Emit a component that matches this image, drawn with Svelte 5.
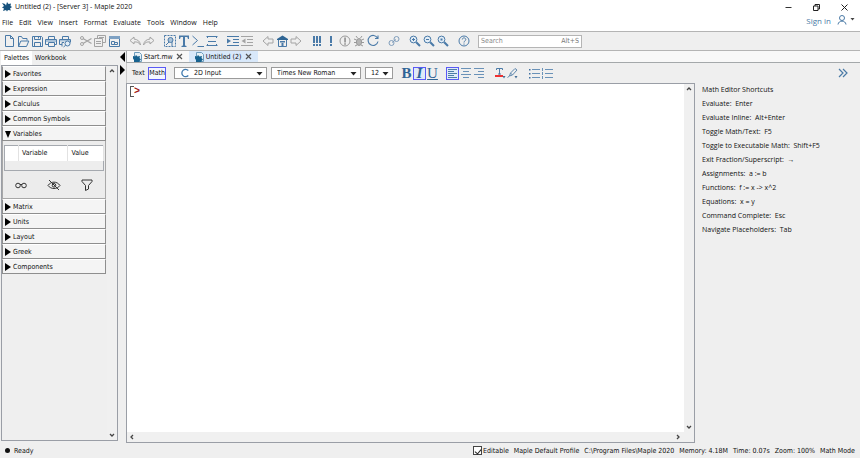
<script>
  const B = '#4a7aa8';
  const G = '#a4a4a4';
  const line = (d, c = B, w = 1) => `<path d="${d}" fill="none" stroke="${c}" stroke-width="${w}"/>`;
  const solid = (d, c = B) => `<path d="${d}" fill="${c}"/>`;
  const lens = '<circle cx="5.5" cy="5.5" r="3.4" fill="#e3edf6" stroke="#4a7aa8"/>' + line('M8.2 8.2L12 12', B, 2);

  const icons = {
    new: line('M3.5 1.5h5l3 3v8h-8z M8.500 1.500v3h3'),
    open: line('M2.500 12.500v-10h3l1.200 2h4.300v2 M2.500 12.500l2.300-5.500h8l-2.300 5.500z'),
    save: line('M2.500 2.500h9l1 1v9h-10z M4.500 2.500v3h6v-3 M4.500 12.500v-4h6v4 M8.500 3v1.500'),
    print: line('M4.500 5V2.500h6V5 M4 10.500H1.500v-5h11v5H10.500 M4.500 8.500h6v4h-6z') + solid('M2 6h10v2H2z', '#a9c2d9'),
    preview: line('M4.500 5V2.500h6V5 M4 10.500H1.500v-5h11v3 M4 12.500V8.500h2') + solid('M2 6h10v1.500H2z', '#a9c2d9') + '<circle cx="9.500" cy="9.500" r="2.500" fill="#e3edf6" stroke="#4a7aa8"/>' + line('M7.600 11.300L5.500 13'),
    cut: line('M4 4.500L12.500 9.500 M4 9.500L12.500 4.500', G, 1.3) + '<circle cx="3" cy="4" r="1.500" fill="none" stroke="#a4a4a4"/><circle cx="3" cy="10" r="1.500" fill="none" stroke="#a4a4a4"/>',
    copy: line('M4.500 4V1.500h8v7H10 M1.500 4.500h8v8h-8z M3 7.500h5 M3 9.500h5 M6 3.500h5', G),
    paste: line('M2.500 2.500h10v10h-10z') + solid('M2 2h11v3H2z', '#7ea1c3') + line('M4.500 7.500h3v3h-3z M7.500 8.500h3v2h-3z'),
    undo: line('M6 3L2 6.500L6 10V8c3-.5 5 .500 6.500 3C12 7.500 10 5.500 6 5z', G),
    redo: line('M8 3l4 3.500L8 10V8c-3-.5-5 .500-6.500 3C2 7.500 4 5.500 8 5z', G),
    region: '<rect x="1.500" y="1.500" width="11" height="11" fill="none" stroke="#4a7aa8" stroke-dasharray="2 1"/><circle cx="7.500" cy="6" r="2.500" fill="#a9c2d9" stroke="#4a7aa8"/>' + line('M6 8l-3 3 M9 8v4'),
    text: solid('M2 1.500h10v3.500h-1L10.300 3H8v8.500l1.500.500v1h-5v-1L6 11.500V3H3.700L3 5H2z'),
    prompt: line('M1.500 2l5 4.500l-5 4.500 M6.500 12.500h6.500'),
    section: line('M1.500 2.500h11 M2.500 4V2.500 M11.500 4V2.500 M1.500 11.500h11 M2.500 10v1.500 M11.500 10v1.500 M3 7.500h8'),
    indent: line('M1 2.500h12 M7 5.500h6 M7 8.500h6 M1 11.500h12') + solid('M1 4.500l4 2.500l-4 2.500z'),
    outdent: line('M1 2.500h12 M7 5.500h6 M7 8.500h6 M1 11.500h12', G) + solid('M5.500 4.500L1.500 7l4 2.500z', G),
    back: line('M7 2.500L2 7l5 4.500V9h5V5H7z', G),
    home: line('M3.500 5.500h8v7h-8z') + solid('M2 5L7.500 1.500L13 5v1H2z', '#2f6594') + solid('M5 7h5v1.500H5z M6.500 9h2v3.500h-2z'),
    forward: line('M7 2.500L12 7l-5 4.500V9H2V5h5z', G),
    runall: [4, 7, 10].map((x) => solid(`M${x - 1} 2h2v7h-2z M${x - 1} 10h2v2h-2z`)).join(''),
    run: solid('M6 2h2v7H6z M6 10h2v2H6z'),
    stop: '<circle cx="7" cy="7" r="5" fill="none" stroke="#999"/>' + solid('M6.300 3.500h1.500v5H6.300z M6.300 9.300h1.500v1.400H6.300z', '#888'),
    debug: '<ellipse cx="7" cy="8" rx="2.600" ry="3.500" fill="#b5b5b5" stroke="#999"/>' + line('M5.500 4L4 2 M8.500 4L10 2 M4.500 6L2 5 M9.500 6L12 5 M4.500 8.500H2 M9.500 8.500H12 M5 11l-2 1 M9 11l2 1', '#999'),
    restart: line('M11.500 4A5 5 0 1 0 12 7.500 M12 1.500v3h-3', B, 1.1),
    link: '<g fill="none" stroke="#7f9dbb"><circle cx="4.500" cy="9" r="2.500"/><circle cx="9.500" cy="5" r="2.500"/></g>' + line('M5 8.500L9 5.500', '#7f9dbb'),
    zoomin: lens + line('M4 5.500h3 M5.500 4v3'),
    zoomout: lens + line('M4 5.500h3'),
    zoomreset: lens + solid('M4.500 4.500h2v2h-2z'),
    help: '<circle cx="7" cy="7" r="5" fill="none" stroke="#4a7aa8"/>' + line('M5.300 5.500c0-2.300 3.500-2 3.500 0c0 1.500-1.800 1.200-1.800 3 M7 9.500v1.200')
  };

  const groups = [
    ['new', 'open', 'save', 'print', 'preview'],
    ['cut', 'copy', 'paste'],
    ['undo', 'redo'],
    ['region', 'text', 'prompt', 'section'],
    ['indent', 'outdent'],
    ['back', 'home', 'forward'],
    ['runall', 'run', 'stop', 'debug', 'restart'],
    ['link'],
    ['zoomin', 'zoomout', 'zoomreset'],
    ['help']
  ];

  const menus = ['File', 'Edit', 'View', 'Insert', 'Format', 'Evaluate', 'Tools', 'Window', 'Help'];
  const palettesTop = ['Favorites', 'Expression', 'Calculus', 'Common Symbols'];
  const palettesBottom = ['Matrix', 'Units', 'Layout', 'Greek', 'Components'];
  const shortcuts = [
    ['Evaluate', 'Enter'],
    ['Evaluate Inline', 'Alt+Enter'],
    ['Toggle Math/Text', 'F5'],
    ['Toggle to Executable Math', 'Shift+F5'],
    ['Exit Fraction/Superscript', '→'],
    ['Assignments', 'a := b'],
    ['Functions', 'f := x -> x^2'],
    ['Equations', 'x = y'],
    ['Command Complete', 'Esc'],
    ['Navigate Placeholders', 'Tab']
  ];
  let editable = $state(true);
</script>

{#snippet icon(name)}
  <svg width="14" height="14" viewBox="0 0 14 14" aria-hidden="true">{@html icons[name]}</svg>
{/snippet}

{#snippet leaf()}
  <svg width="10" height="10" viewBox="0 0 10 10" aria-hidden="true">
    <path d="M1.500 0.500h5l2 2v7h-7z" fill="#e6f0f6" stroke="#6d9cbc" />
    <path d="M0 4l2 .5L3 3l1.500 1.500L7 4L6.500 6L8 7.500L6.500 9v1H1V8L0 6.500z" fill="#17628f" />
  </svg>
{/snippet}

{#snippet chevron(dir)}
  <svg class="chev {dir}" width="8" height="8" viewBox="0 0 8 8" aria-hidden="true"><path d="M2 5L4 3L6 5" fill="none" stroke="#444" stroke-width="1.300" /></svg>
{/snippet}

{#snippet down()}
  <svg class="down" width="7" height="5" viewBox="0 0 7 5" aria-hidden="true"><path d="M0.500 1h6L3.500 4.500z" fill="#222" /></svg>
{/snippet}

<div class="app">
  <header>
    <div class="title">
      <svg width="10" height="10" viewBox="0 0 10 10" aria-hidden="true"><path d="M0 1l3 1l1 1.500L5 0l1.500 2L9 1.500L8.500 4L10 5L8 6.500l1 2L6 8l-1 1.500L4 8L1 9l1-2.500L0 5.500L2 4z" fill="#17527d" /></svg>
      <h1>Untitled (2) - [Server 3] - Maple 2020</h1>
      <div class="window-buttons">
        <button aria-label="Minimize"><svg width="9" height="9" viewBox="0 0 9 9"><path d="M1.500 4.500h6" stroke="#333" /></svg></button>
        <button aria-label="Restore"><svg width="9" height="9" viewBox="0 0 9 9"><path d="M1.500 3h4.500v4.500H1.500z M3 3V1.500h4.500V6H6" fill="none" stroke="#222" /></svg></button>
        <button aria-label="Close"><svg width="9" height="9" viewBox="0 0 9 9"><path d="M1.500 1.500l6 6 M7.500 1.500l-6 6" stroke="#222" /></svg></button>
      </div>
    </div>
    <div class="menu-row">
      <nav>
        {#each menus as m}<button>{m}</button>{/each}
      </nav>
      <div class="account">
        <a href="#signin">Sign in</a>
        <button aria-label="Account">
          <svg width="18" height="10" viewBox="0 0 18 10"><circle cx="5" cy="3" r="2.500" fill="none" stroke="#4a7aa6" /><path d="M1 9.500C1.500 5 8.500 5 9 9.500" fill="none" stroke="#4a7aa6" /><path d="M13.500 3h4l-2 2.500z" fill="#444" /></svg>
        </button>
      </div>
    </div>
  </header>

  <div class="toolbar" role="toolbar" aria-label="Main">
    {#each groups as g}
      <div class="group">
        {#each g as name}<button aria-label={name}>{@render icon(name)}</button>{/each}
      </div>
    {/each}
    <label class="search">
      <input type="text" placeholder="Search" aria-label="Search" />
      <span>Alt+S</span>
    </label>
  </div>

  <div class="body">
    <aside class="left">
      <div class="side-tabs">
        <button class="on">Palettes</button>
        <button>Workbook</button>
      </div>
      <div class="side-panel">
        <div class="palettes">
          {#each palettesTop as p}
            <button class="palette"><svg width="6" height="8" viewBox="0 0 6 8"><path d="M0 0l6 4L0 8z" /></svg>{p}</button>
          {/each}
          <button class="palette"><svg width="6" height="8" viewBox="0 0 6 8"><path d="M0 1h6L3 8z" /></svg>Variables</button>
          <div class="variables">
            <table>
              <thead><tr><th class="narrow"></th><th>Variable</th><th>Value</th></tr></thead>
              <tbody><tr><td colspan="3"></td></tr></tbody>
            </table>
            <div class="var-tools">
              <button aria-label="Show"><svg width="14" height="12" viewBox="0 0 14 12"><g fill="none" stroke="#333"><circle cx="4" cy="6.500" r="2.300" /><circle cx="10" cy="6.500" r="2.300" /><path d="M6 5.500h2" /></g></svg></button>
              <button aria-label="Hide"><svg width="14" height="12" viewBox="0 0 14 12"><g fill="none" stroke="#333"><path d="M1 6.500C4 2 10 2 13 6.500C10 10.500 4 10.500 1 6.500z M2 1l10 10" /><circle cx="7" cy="6.300" r="1.800" /></g></svg></button>
              <button aria-label="Filter"><svg width="14" height="12" viewBox="0 0 14 12"><path d="M2 1h10v1.500L8.500 6.500V10L5.500 11.500V6.500L2 2.500z" fill="none" stroke="#333" /></svg></button>
            </div>
          </div>
          {#each palettesBottom as p}
            <button class="palette"><svg width="6" height="8" viewBox="0 0 6 8"><path d="M0 0l6 4L0 8z" /></svg>{p}</button>
          {/each}
        </div>
        <div class="vscroll">
          <button aria-label="Scroll up">{@render chevron('up')}</button>
          <button aria-label="Scroll down">{@render chevron('dn')}</button>
        </div>
      </div>
    </aside>

    <div class="toggles">
      <button aria-label="Hide palettes"><svg width="5" height="10" viewBox="0 0 5 10"><path d="M5 0v10L0 5z" /></svg></button>
      <button aria-label="Show palettes"><svg width="5" height="10" viewBox="0 0 5 10"><path d="M0 0v10l5-5z" /></svg></button>
    </div>

    <main>
      <div class="doc-tabs">
        <div class="tab">{@render leaf()}<span>Start.mw</span><button aria-label="Close Start.mw"><svg width="7" height="7" viewBox="0 0 7 7"><path d="M1 1l5 5M6 1L1 6" stroke="#555" stroke-width="1.200" /></svg></button></div>
        <div class="tab on">{@render leaf()}<span>Untitled (2)</span><button aria-label="Close Untitled (2)"><svg width="7" height="7" viewBox="0 0 7 7"><path d="M1 1l5 5M6 1L1 6" stroke="#555" stroke-width="1.200" /></svg></button></div>
      </div>
      <div class="context">
        <div class="mode"><button>Text</button><button class="boxed">Math</button></div>
        <label class="combo style">
          <svg width="10" height="10" viewBox="0 0 10 10" aria-hidden="true"><path d="M8.300 2.500A3.700 3.700 0 1 0 8.300 7.500" fill="none" stroke="#3f79ad" stroke-width="1.300" /></svg>
          <select aria-label="Style"><option>2D Input</option></select>{@render down()}
        </label>
        <label class="combo font"><select aria-label="Font"><option>Times New Roman</option></select>{@render down()}</label>
        <label class="combo size"><select aria-label="Size"><option>12</option></select>{@render down()}</label>
        <div class="fmt letters">
          <button class="b">B</button><button class="i boxed">I</button><button class="u">U</button>
        </div>
        <div class="fmt">
          <button class="boxed" aria-label="Align left"><svg width="11" height="11" viewBox="0 0 11 11"><path d="M1 1.500h9M1 3.500h6M1 5.500h9M1 7.500h6M1 9.500h9" stroke="#4d7ca8" /></svg></button>
          <button aria-label="Align center"><svg width="12" height="12" viewBox="0 0 12 12"><path d="M1 1.500h10M3 4.500h6M1 7.500h10M3 10.500h6" stroke="#6a92b8" /></svg></button>
          <button aria-label="Align right"><svg width="12" height="12" viewBox="0 0 12 12"><path d="M1 1.500h10M5 4.500h6M1 7.500h10M5 10.500h6" stroke="#6a92b8" /></svg></button>
        </div>
        <div class="fmt">
          <button aria-label="Text color"><svg width="12" height="12" viewBox="0 0 12 12"><path d="M2.500 3V1.500h6V3M5.500 1.500v6M4 7h3" fill="none" stroke="#4d7ca8" /><path d="M1 8h8v2H1z" fill="#f03030" /><path d="M8.500 9h3L10 11.500z" fill="#456f96" /></svg></button>
          <button aria-label="Highlight"><svg width="12" height="12" viewBox="0 0 12 12"><path d="M2.500 9L3.500 6l4.500-4.500L10 3L5.500 8zM3.500 6L5.500 8M0.500 10.500L2.500 9" fill="none" stroke="#5f88ae" /><path d="M7.500 9h3L9 11.500z" fill="#456f96" /></svg></button>
        </div>
        <div class="fmt">
          <button aria-label="Bulleted list"><svg width="12" height="12" viewBox="0 0 12 12"><path d="M4 2.500h8M4 6.500h8M4 10.500h8" stroke="#6a92b8" /><path d="M1 2h1.500v1.500H1zM1 6h1.500v1.500H1zM1 10h1.500v1.500H1z" fill="#3f6f9f" /></svg></button>
          <button aria-label="Numbered list"><svg width="12" height="12" viewBox="0 0 12 12"><path d="M4 2.500h8M4 6.500h8M4 10.500h8M1.500 1v3M1.500 5v3M1.500 9v3" stroke="#6a92b8" /></svg></button>
        </div>
        <button class="expand" aria-label="Collapse panel"><svg width="10" height="10" viewBox="0 0 10 10"><path d="M1 1l4 4l-4 4M5 1l4 4l-4 4" fill="none" stroke="#4a7aa6" stroke-width="1.200" /></svg></button>
      </div>

      <div class="work">
        <section class="doc" aria-label="Worksheet">
          <div class="page-row">
            <div class="page"><span class="bracket"></span><span class="caret">&gt;</span></div>
            <div class="vscroll">
              <button aria-label="Scroll up">{@render chevron('up')}</button>
              <button aria-label="Scroll down">{@render chevron('dn')}</button>
            </div>
          </div>
          <div class="hscroll">
            <button aria-label="Scroll left">{@render chevron('lt')}</button>
            <button aria-label="Scroll right">{@render chevron('rt')}</button>
          </div>
        </section>
        <aside class="shortcuts">
          <h2>Math Editor Shortcuts</h2>
          {#each shortcuts as [name, key]}<p>{name}:&nbsp; {key}</p>{/each}
        </aside>
      </div>
    </main>
  </div>

  <footer>
    <span class="dot"></span><span>Ready</span>
    <div class="status">
      <label><input type="checkbox" bind:checked={editable} />Editable</label>
      <span>Maple Default Profile</span>
      <span>C:\Program Files\Maple 2020</span>
      <span>Memory: 4.18M</span>
      <span>Time: 0.07s</span>
      <span>Zoom: 100%</span>
      <span>Math Mode</span>
    </div>
  </footer>
</div>

<style>
  :global(body) { margin: 0; }
  .app {
    min-height: 100vh;
    display: flex;
    flex-direction: column;
    background: #efefef;
    color: #111;
    font: 7px/10px "DejaVu Sans Condensed", "DejaVu Sans", sans-serif;
  }
  .app * { box-sizing: border-box; }
  svg { display: block; flex: none; }
  button, select, input { font: inherit; color: inherit; }
  button { margin: 0; padding: 0; border: 0; background: none; white-space: nowrap; }
  h1, h2, p { margin: 0; font: inherit; }

  header { background: #fff; height: 31px; font: 7px/12px "Open Sans", sans-serif; }
  .title { display: flex; align-items: center; gap: 3px; height: 14px; padding-left: 2px; }
  .window-buttons { margin-left: auto; display: flex; gap: 19px; padding-right: 11px; }
  .menu-row { display: flex; justify-content: space-between; height: 17px; }
  nav { display: flex; align-items: center; gap: 6px; padding-left: 2px; }
  .account { display: flex; align-items: flex-start; gap: 6px; padding: 1px 5px 0 0; }
  .account a { color: #4a7aa6; font-size: 8px; text-decoration: none; }

  .toolbar {
    display: flex;
    align-items: center;
    gap: 7px;
    height: 20px;
    padding-left: 2px;
    border: solid #b4b4b4;
    border-width: 1px 0;
  }
  .group { display: flex; }
  .search {
    display: flex;
    align-items: center;
    width: 104px;
    height: 13px;
    padding: 0 2px;
    border: 1px solid #b5b5b5;
    background: #fff;
    color: #777;
  }
  .search input { flex: 1; min-width: 0; padding: 0; border: 0; outline: 0; background: none; }
  .search input::placeholder { color: #888; opacity: 1; }

  .body { flex: 1; display: flex; }
  .left { width: 118px; display: flex; flex-direction: column; padding: 0 0 2px 1px; }
  .side-tabs { display: flex; height: 14px; }
  .side-tabs button { padding: 0 3px; }
  .side-tabs button.on { background: #fff; }
  .side-panel { flex: 1; display: flex; border: 1px solid #9a9ea6; }
  .palettes { flex: 1; padding-right: 1px; }
  .palette {
    display: flex;
    align-items: center;
    gap: 2px;
    width: 100%;
    height: 15px;
    padding-left: 2px;
    background: #f4f4f4;
    border: 1px solid #8e8e8e;
    border-top-color: #fff;
  }
  .variables { height: 58px; padding: 4px 1px 0; border: 1px solid #a8a8a8; border-top: 0; background: #ececec; }
  table { width: 100%; border-collapse: collapse; border: 1px solid #a5a9af; }
  th { height: 15px; padding: 0 0 0 3px; background: #fff; font-weight: normal; text-align: left; border-right: 1px solid #e2e2e2; }
  th.narrow { width: 14px; padding: 0; }
  td { height: 10px; padding: 0; background: #ededed; }
  .var-tools { display: flex; justify-content: space-around; align-items: center; height: 27px; }
  .vscroll { display: flex; flex-direction: column; justify-content: space-between; align-items: center; width: 10px; padding: 1px 0; background: #f0f0f0; }
  .hscroll { display: flex; justify-content: space-between; align-items: center; height: 10px; padding: 0 12px 0 1px; background: #f0f0f0; }
  .chev.dn { transform: rotate(180deg); }
  .chev.lt { transform: rotate(-90deg); }
  .chev.rt { transform: rotate(90deg); }

  .toggles { display: flex; flex-direction: column; gap: 3px; width: 8px; padding: 1px 0 0 2px; align-items: flex-start; }

  main { flex: 1; min-width: 0; display: flex; flex-direction: column; }
  .doc-tabs { display: flex; height: 12px; background: #f8f8f8; border-bottom: 1px solid #a4a8aa; border-left: 1px solid #a4a8aa; }
  .tab { display: flex; align-items: center; gap: 1px; padding: 0 6px; }
  .tab button { margin-left: 2px; }
  .tab.on { background: #d8e8fa; }
  .context { display: flex; align-items: center; height: 20px; padding: 0 12px 0 5px; border-left: 1px solid #c8c8c8; }
  .mode { display: flex; align-items: center; justify-content: space-between; width: 34px; margin-right: 8px; }
  .mode button { height: 13px; }
  .context .boxed { border: 1px solid #5a5af5; background: #dfeaf8; }
  .mode button.boxed { background: #f3f6ff; }
  .combo { display: flex; align-items: center; height: 12px; padding: 0 3px; border: 1px solid #9b9b9b; background: #fff; margin-right: 4px; }
  .combo select { flex: 1; min-width: 0; appearance: none; border: 0; padding: 0 2px; background: none; outline: 0; height: 10px; }
  .style { width: 93px; padding-left: 5px; }
  .style select { padding-left: 4px; }
  .font { width: 90px; }
  .size { width: 28px; }
  .fmt { display: flex; align-items: center; margin-right: 8px; }
  .fmt button { display: flex; align-items: center; justify-content: center; width: 13px; height: 13px; }
  .letters { margin: 0 7px 0 3px; font: 15px/13px "Liberation Serif", serif; color: #2f6496; }
  .b { font-weight: bold; }
  .i { font-style: italic; font-weight: bold; }
  .u { text-decoration: underline; }
  .expand { margin-left: auto; }

  .work { flex: 1; display: flex; }
  .doc { flex: 1; display: flex; flex-direction: column; border: 1px solid #9a9ea6; }
  .page-row { flex: 1; display: flex; }
  .page { flex: 1; display: flex; align-items: flex-start; padding: 2px 3px; background: #fff; }
  .bracket { width: 4px; height: 11px; border: 1px solid #555; border-right: 0; }
  .caret { color: #a01818; font: bold 10px/12px "Liberation Mono", monospace; }
  .shortcuts { width: 165px; padding-left: 7px; font: 7px/14px "Open Sans", sans-serif; white-space: nowrap; }

  footer { display: flex; align-items: center; gap: 4px; height: 15px; padding: 0 5px; }
  .dot { width: 5px; height: 5px; border-radius: 50%; background: #111; }
  .status { display: flex; gap: 5px; margin-left: auto; }
  .status label { display: flex; align-items: center; gap: 1px; }
  .status input {
    appearance: none;
    display: flex;
    align-items: center;
    justify-content: center;
    width: 9px;
    height: 9px;
    margin: 0;
    border: 1px solid #444;
    background: #fff;
  }
  .status input:checked::after { content: ""; width: 3px; height: 5px; border: solid #222; border-width: 0 1px 1px 0; transform: rotate(40deg); }
</style>
